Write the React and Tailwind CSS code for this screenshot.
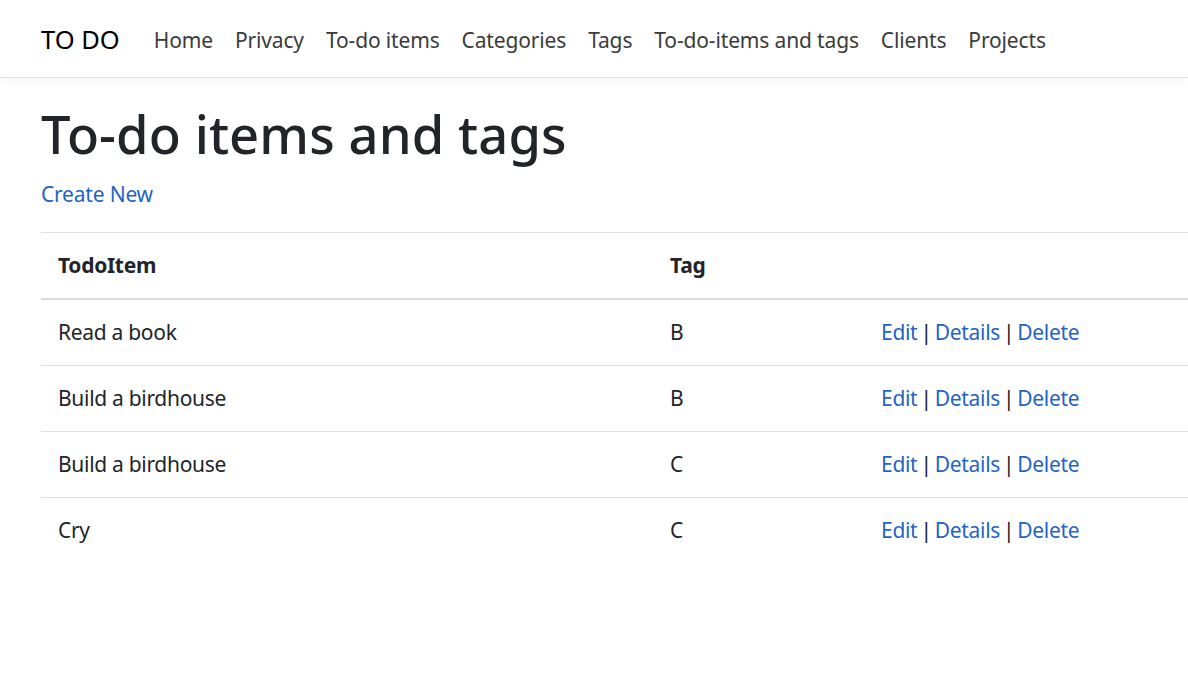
const navLinks = [
  "Home",
  "Privacy",
  "To-do items",
  "Categories",
  "Tags",
  "To-do-items and tags",
  "Clients",
  "Projects",
];

const rows = [
  { item: "Read a book", tag: "B" },
  { item: "Build a birdhouse", tag: "B" },
  { item: "Build a birdhouse", tag: "C" },
  { item: "Cry", tag: "C" },
];

const Actions = () => (
  <span className="flex items-center">
    <a className="text-[#1f64c6]">Edit</a>
    <span className="mx-[3px]">|</span>
    <a className="text-[#1f64c6]">Details</a>
    <span className="mx-[3px]">|</span>
    <a className="text-[#1f64c6]">Delete</a>
  </span>
);

const App = () => {
  return (
    <div className="min-h-[676px] w-[1188px] overflow-hidden bg-white text-[#212529] font-['Segoe_UI','Noto_Sans',sans-serif]">
      <header className="h-[78px] border-b border-[#dee2e6] bg-white shadow-[0_4px_10px_rgba(0,0,0,0.04)]">
        <nav className="flex h-full items-center pl-[41px] pt-[3px]">
          <a className="mr-[23px] text-[25.5px] leading-none text-black tracking-[0px]">TO DO</a>
          <ul className="flex items-center">
            {navLinks.map((l) => (
              <li key={l} className="px-[11px] text-[21px] leading-none text-[#3b3b3b] tracking-[-0.15px]">
                {l}
              </li>
            ))}
          </ul>
        </nav>
      </header>

      <main className="pl-[41px]">
        <h1 className="mt-[25px] text-[52.5px] font-medium leading-[62px] tracking-[0.1px] text-[#212529]">
          To-do items and tags
        </h1>
        <p className="mt-[14px] text-[21px] leading-[31px] tracking-[-0.2px]">
          <a className="text-[#1f64c6]">Create New</a>
        </p>

        <table className="mt-[22px] w-[1200px] border-collapse text-[21px] tracking-[-0.3px]">
          <thead>
            <tr className="border-t border-[#dee2e6] border-b-2 border-b-[#d9dcdf]">
              <th className="w-[612px] px-[17px] py-[17px] text-left font-bold leading-[31px]">TodoItem</th>
              <th className="w-[211px] px-[17px] py-[17px] text-left font-bold leading-[31px]">Tag</th>
              <th className="px-[17px] py-[17px]"></th>
            </tr>
          </thead>
          <tbody>
            {rows.map((r, i) => (
              <tr key={i} className={i < rows.length - 1 ? "border-b border-[#dee2e6]" : ""}>
                <td className="px-[17px] py-[17px] leading-[31px]">{r.item}</td>
                <td className="px-[17px] py-[17px] leading-[31px]">{r.tag}</td>
                <td className="px-[17px] py-[17px] leading-[31px]">
                  <Actions />
                </td>
              </tr>
            ))}
          </tbody>
        </table>
      </main>
    </div>
  );
};

export default App;
